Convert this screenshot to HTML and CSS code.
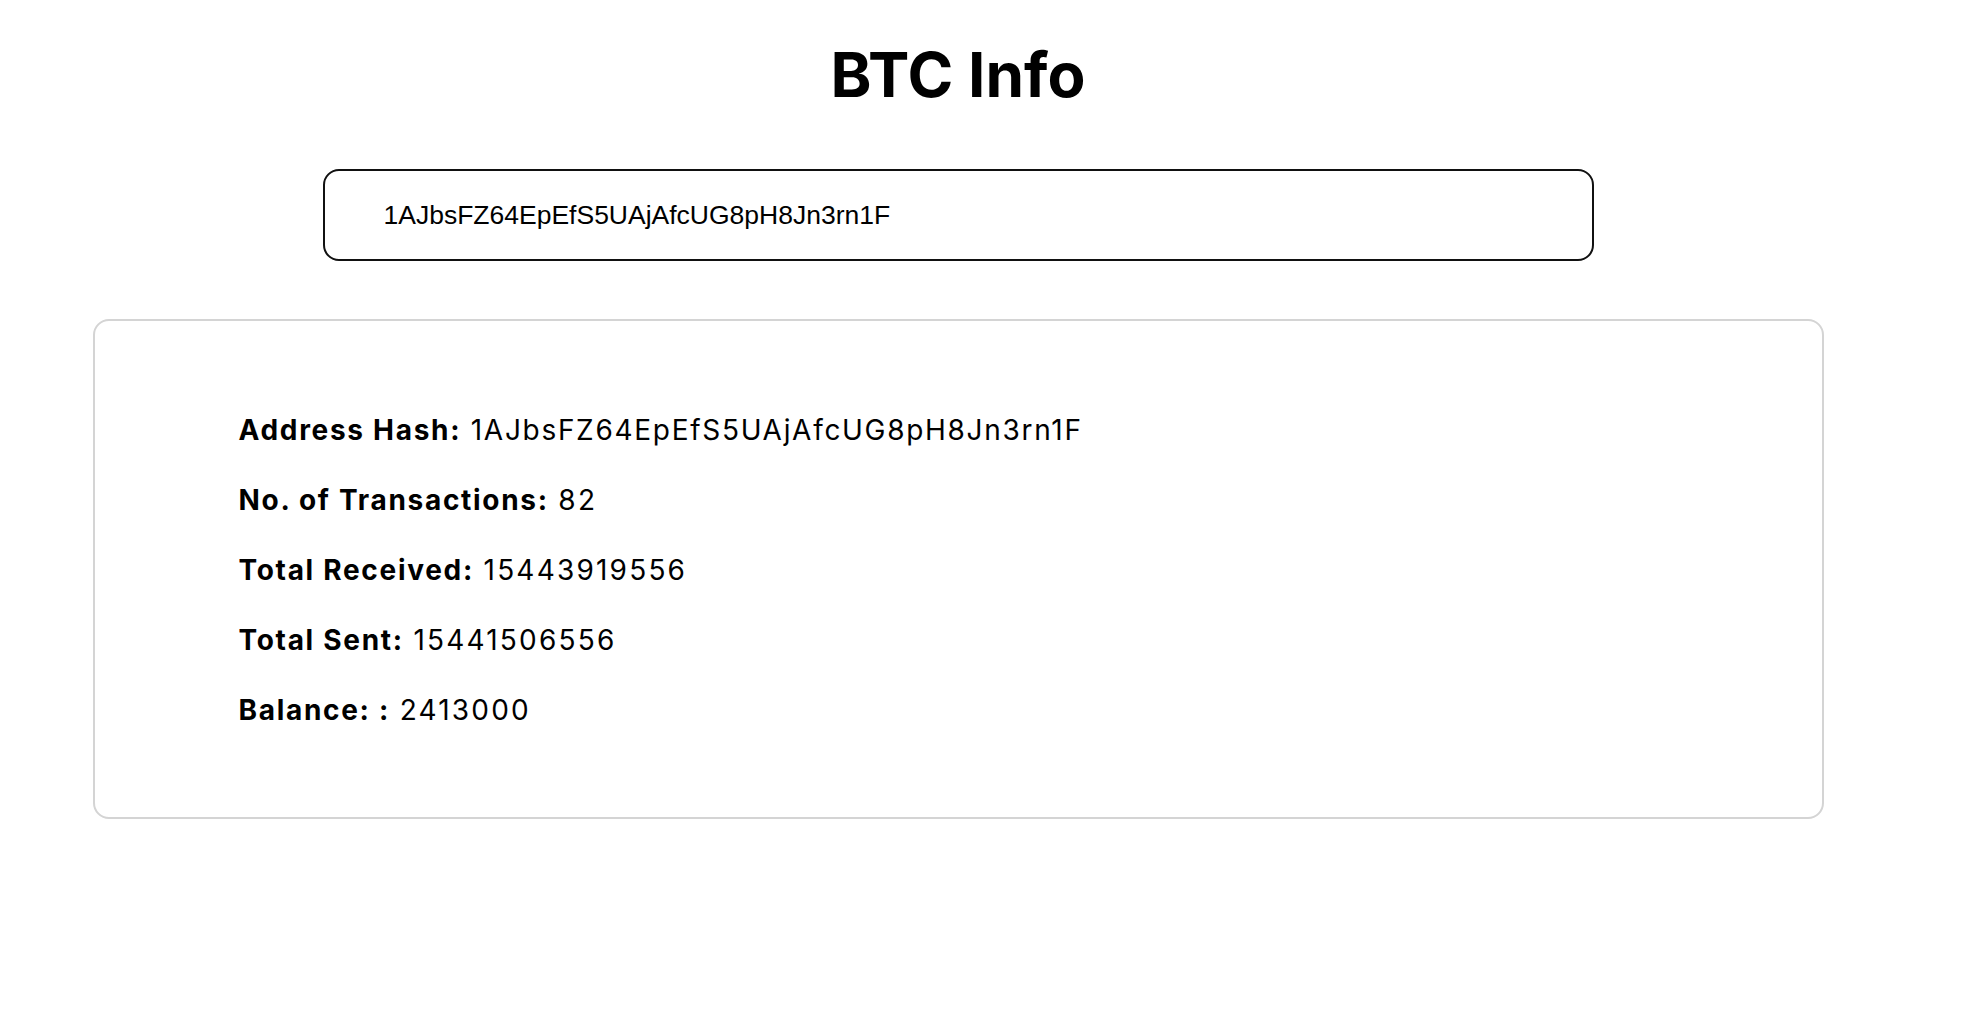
FILE: index.html
```html
<!DOCTYPE html>
<html lang="en">
<head>
<meta charset="utf-8">
<title>BTC Info</title>
<link rel="stylesheet" href="styles.css">
</head>
<body>
<div class="page">
  <h1 class="title">BTC Info</h1>
  <div class="search">
    <input class="search-input" type="text" value="1AJbsFZ64EpEfS5UAjAfcUG8pH8Jn3rn1F">
  </div>
  <div class="card">
    <p class="row"><strong>Address Hash:</strong> 1AJbsFZ64EpEfS5UAjAfcUG8pH8Jn3rn1F</p>
    <p class="row"><strong>No. of Transactions:</strong> <span class="num">82</span></p>
    <p class="row"><strong>Total Received:</strong> <span class="num">15443919556</span></p>
    <p class="row"><strong>Total Sent:</strong> <span class="num">15441506556</span></p>
    <p class="row"><strong>Balance: :</strong> <span class="num">2413000</span></p>
  </div>
</div>
</body>
</html>
```

FILE: styles.css
```css
html, body {
  margin: 0;
  padding: 0;
  background: #ffffff;
}

body {
  font-family: Inter, "Noto Sans", sans-serif;
  color: #000;
}

.page {
  width: 1900px;
  margin: 0 8px;
  display: flex;
  flex-direction: column;
  align-items: center;
}

.title {
  margin: 37px 0 0;
  font-size: 62px;
  line-height: 75px;
  font-weight: 700;
  text-align: center;
}

.search {
  margin-top: 57px;
  width: 1271px;
}

.search-input {
  box-sizing: border-box;
  width: 100%;
  height: 92px;
  border: 2px solid #111;
  border-radius: 16px;
  padding: 0 0 0 59px;
  font-family: "Liberation Sans", Arial, sans-serif;
  font-size: 26.5px;
  color: #000;
  background: #fff;
  outline: none;
}

.card {
  box-sizing: border-box;
  margin-top: 58px;
  width: 1731px;
  border: 2px solid #d4d4d4;
  border-radius: 16px;
  padding: 92px 144px 90px;
  display: flex;
  flex-direction: column;
  gap: 36px;
}

.row {
  margin: 0;
  font-size: 28px;
  line-height: 34px;
  letter-spacing: 1.7px;
}

.row strong {
  font-weight: 700;
}

.num {
  letter-spacing: 2.2px;
}
```
